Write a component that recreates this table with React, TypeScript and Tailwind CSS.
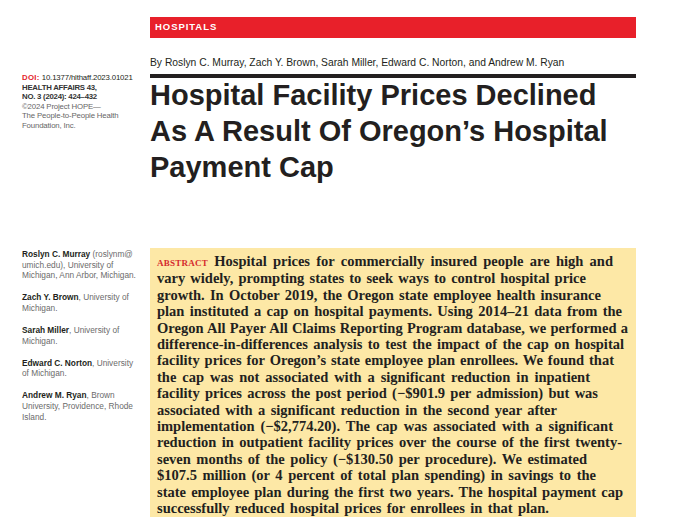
import React from "react";

const sans = { fontFamily: "'Liberation Sans', Arial, sans-serif" };
const serif = { fontFamily: "'Liberation Serif', 'Times New Roman', serif" };

const abstractLines: { w: number; t: React.ReactNode }[] = [
  {
    w: 456,
    t: (
      <>
        <span className="text-[#d52b2e] text-[12.5px] tracking-[0.02em]" style={{ fontVariant: "small-caps" }}>
          abstract
        </span>{" "}
        Hospital prices for commercially insured people are high and
      </>
    ),
  },
  { w: 429, t: "vary widely, prompting states to seek ways to control hospital price" },
  { w: 444, t: "growth. In October 2019, the Oregon state employee health insurance" },
  { w: 465, t: "plan instituted a cap on hospital payments. Using 2014–21 data from the" },
  { w: 471, t: "Oregon All Payer All Claims Reporting Program database, we performed a" },
  { w: 467, t: "difference-in-differences analysis to test the impact of the cap on hospital" },
  { w: 457, t: "facility prices for Oregon’s state employee plan enrollees. We found that" },
  { w: 433, t: "the cap was not associated with a significant reduction in inpatient" },
  { w: 441, t: "facility prices across the post period (−$901.9 per admission) but was" },
  { w: 400, t: "associated with a significant reduction in the second year after" },
  { w: 456, t: "implementation (−$2,774.20). The cap was associated with a significant" },
  { w: 465, t: "reduction in outpatient facility prices over the course of the first twenty-" },
  { w: 430, t: "seven months of the policy (−$130.50 per procedure). We estimated" },
  { w: 439, t: "$107.5 million (or 4 percent of total plan spending) in savings to the" },
  { w: 466, t: "state employee plan during the first two years. The hospital payment cap" },
  { w: 392, t: "successfully reduced hospital prices for enrollees in that plan." },
];

const authors: { name: string; rest: React.ReactNode }[] = [
  {
    name: "Roslyn C. Murray",
    rest: (
      <>
        {" "}(roslynm@
        <br />
        umich.edu), University of
        <br />
        Michigan, Ann Arbor, Michigan.
      </>
    ),
  },
  { name: "Zach Y. Brown", rest: (<>, University of<br />Michigan.</>) },
  { name: "Sarah Miller", rest: (<>, University of<br />Michigan.</>) },
  { name: "Edward C. Norton", rest: (<>, University<br />of Michigan.</>) },
  {
    name: "Andrew M. Ryan",
    rest: (<>, Brown<br />University, Providence, Rhode<br />Island.</>),
  },
];

export default function App() {
  return (
    <div className="w-[680px] h-[532px] bg-white overflow-hidden text-[#231f20]">
      <div className="grid grid-cols-[150px_486px] grid-rows-[248px_auto]">
        {/* left header: DOI */}
        <div className="pl-[22px] pt-[73px] text-[7.8px] leading-[9.5px] tracking-[-0.15px]" style={sans}>
          <div>
            <span className="text-[#e3262d] font-bold tracking-[0.04em]">DOI:</span>{" "}
            <span className="text-[#231f20]">10.1377/hlthaff.2023.01021</span>
          </div>
          <div className="font-bold text-[#333] tracking-[-0.25px]">HEALTH AFFAIRS 43,</div>
          <div className="font-bold text-[#333] tracking-[-0.25px]">NO. 3 (2024): 424–432</div>
          <div className="text-[#666]">©2024 Project HOPE—</div>
          <div className="text-[#666]">The People-to-People Health</div>
          <div className="text-[#666]">Foundation, Inc.</div>
        </div>

        {/* right header */}
        <div className="pt-[17px]">
          <div className="h-[21px] bg-[#e8202a] flex items-center pl-[5px]">
            <span className="text-white font-bold text-[9.5px] tracking-[0.1em]" style={sans}>
              HOSPITALS
            </span>
          </div>
          <div className="mt-[18px] text-[10.3px] leading-[14px] text-[#231f20]" style={sans}>
            By Roslyn C. Murray, Zach Y. Brown, Sarah Miller, Edward C. Norton, and Andrew M. Ryan
          </div>
          <div className="mt-[4px] h-[4px] bg-[#231f20]" />
          <h1 className="-mt-[1px] text-[29px] leading-[36px] font-bold text-[#231f20]" style={sans}>
            Hospital Facility Prices Declined
            <br />
            As A Result Of Oregon’s Hospital
            <br />
            Payment Cap
          </h1>
        </div>

        {/* left: authors */}
        <div
          className="pl-[22px] pt-[1px] flex flex-col gap-[11.5px] text-[8.3px] leading-[10.6px] text-[#6b6b6b]"
          style={sans}
        >
          {authors.map((a) => (
            <div key={a.name}>
              <span className="font-bold text-[#231f20]">{a.name}</span>
              {a.rest}
            </div>
          ))}
        </div>

        {/* right: abstract */}
        <div className="bg-[#fde8a6] h-[269px] pl-[7px] pt-[5px]" style={serif}>
          <div className="font-bold text-[14.5px] leading-[16.4px] text-[#231f20]">
            {abstractLines.map((l, i) => (
              <div
                key={i}
                className="whitespace-nowrap text-justify [text-align-last:justify]"
                style={{ width: l.w }}
              >
                {l.t}
              </div>
            ))}
          </div>
        </div>
      </div>
    </div>
  );
}
